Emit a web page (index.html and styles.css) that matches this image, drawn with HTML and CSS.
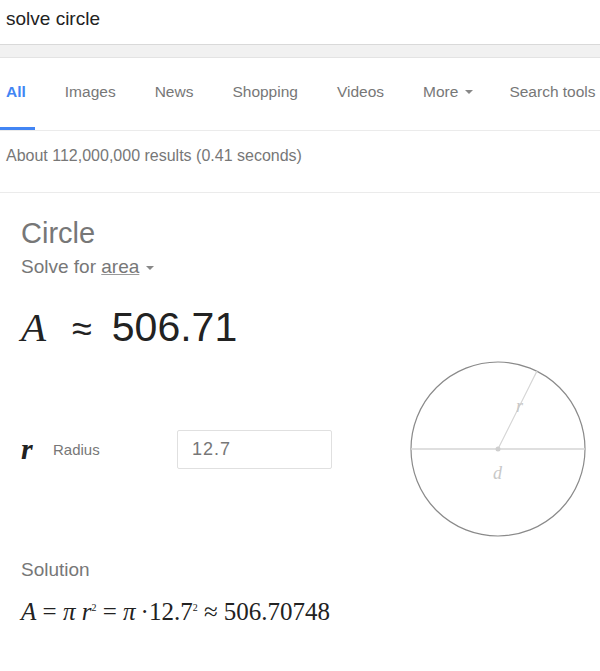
FILE: index.html
```html
<!DOCTYPE html>
<html lang="en">
<head>
    <meta charset="UTF-8">
    <title>solve circle</title>
    <link rel="stylesheet" href="styles.css">
</head>
<body>
    <div class="search-bar">solve circle</div>
    <div class="band"></div>
    <div class="tabs">
        <span class="tab active">All</span>
        <span class="tab">Images</span>
        <span class="tab">News</span>
        <span class="tab">Shopping</span>
        <span class="tab">Videos</span>
        <span class="tab more">More <span class="caret"></span></span>
        <span class="tab">Search tools</span>
    </div>
    <div class="stats">About 112,000,000 results (0.41 seconds)</div>

    <div class="card">
        <div class="title">Circle</div>
        <div class="solve-for">Solve for <u>area</u><span class="caret"></span></div>
        <div class="answer"><span class="var">A</span><span class="approx">&asymp;</span>506.71</div>

        <div class="middle">
            <div class="input-row">
                <span class="var small">r</span>
                <span class="label">Radius</span>
                <div class="field">12.7</div>
            </div>
            <svg class="diagram" width="180" height="180" viewBox="0 0 180 180">
                <circle cx="88" cy="90" r="87" fill="none" stroke="#8a8a8a" stroke-width="1.2"/>
                <line x1="1" y1="90" x2="175" y2="90" stroke="#d4d4d4" stroke-width="1.5"/>
                <line x1="88" y1="90" x2="127" y2="12" stroke="#d4d4d4" stroke-width="1.2"/>
                <circle cx="88" cy="90" r="2.5" fill="#cfcfcf"/>
                <text x="106" y="53" class="dlabel">r</text>
                <text x="83" y="120" class="dlabel">d</text>
            </svg>
        </div>

        <div class="solution-label">Solution</div>
        <div class="equation">
            <i>A</i> = <i>&pi;</i> <i>r</i><sup>2</sup> = <i>&pi;</i>&thinsp;&middot;12.7<sup>2</sup> &asymp; 506.70748
        </div>
    </div>
</body>
</html>
```

FILE: styles.css
```css
body {
    margin: 0;
    font-family: "Liberation Sans", Arial, sans-serif;
    background: #fff;
    overflow: hidden;
}
.search-bar {
    height: 44px;
    line-height: 38px;
    padding-left: 6px;
    font-size: 19px;
    color: #222;
    border-bottom: 1px solid #d9d9d9;
}
.band {
    height: 12px;
    background: #f1f1f1;
    border-bottom: 1px solid #e3e3e3;
}
.tabs {
    display: flex;
    height: 72px;
    border-bottom: 1px solid #ebebeb;
    font-size: 15.5px;
    color: #777;
    white-space: nowrap;
}
.tab {
    display: flex;
    align-items: center;
    margin-right: 39px;
    padding-bottom: 4px;
}
.tab.more {
    margin-right: 36px;
}
.tab.active {
    color: #4285f4;
    font-weight: bold;
    padding: 0 9px 4px 6px;
    margin-right: 30px;
    box-shadow: inset 0 -3px 0 #4285f4;
}
.caret {
    display: inline-block;
    width: 0;
    height: 0;
    margin-left: 7px;
    border-left: 4px solid transparent;
    border-right: 4px solid transparent;
    border-top: 4px solid #888;
    vertical-align: middle;
}
.stats {
    height: 61px;
    line-height: 50px;
    padding-left: 6px;
    font-size: 16px;
    color: #777;
    border-bottom: 1px solid #ebebeb;
}
.card {
    padding: 22px 0 0 21px;
}
.title {
    font-size: 29px;
    color: #777;
    line-height: 36px;
}
.solve-for {
    font-size: 19px;
    color: #777;
    line-height: 24px;
    margin-top: 4px;
}
.solve-for u {
    text-decoration-color: #999;
}
.answer {
    font-size: 41px;
    color: #222;
    margin-top: 24px;
    line-height: 48px;
}
.var {
    font-family: "Liberation Serif", "Times New Roman", serif;
    font-style: italic;
}
.approx {
    font-size: 36px;
    margin: 0 20px 0 26px;
}
.middle {
    display: flex;
    align-items: center;
    margin-top: 6px;
}
.input-row {
    display: flex;
    align-items: center;
    width: 389px;
}
.var.small {
    font-size: 30px;
    font-weight: bold;
    color: #222;
    width: 32px;
}
.label {
    font-size: 15px;
    color: #777;
    width: 124px;
}
.field {
    width: 139px;
    height: 37px;
    border: 1px solid #e0e0e0;
    border-radius: 2px;
    line-height: 37px;
    padding-left: 14px;
    font-size: 18px;
    letter-spacing: 1px;
    color: #777;
}
.dlabel {
    font-family: "Liberation Serif", "Times New Roman", serif;
    font-style: italic;
    font-size: 18px;
    fill: #c8c8c8;
}
.solution-label {
    font-size: 19px;
    color: #777;
    margin-top: 20px;
}
.equation {
    font-family: "Liberation Serif", "Times New Roman", serif;
    font-size: 25px;
    color: #222;
    margin-top: 17px;
}
.equation sup {
    font-size: 10px;
}
```
